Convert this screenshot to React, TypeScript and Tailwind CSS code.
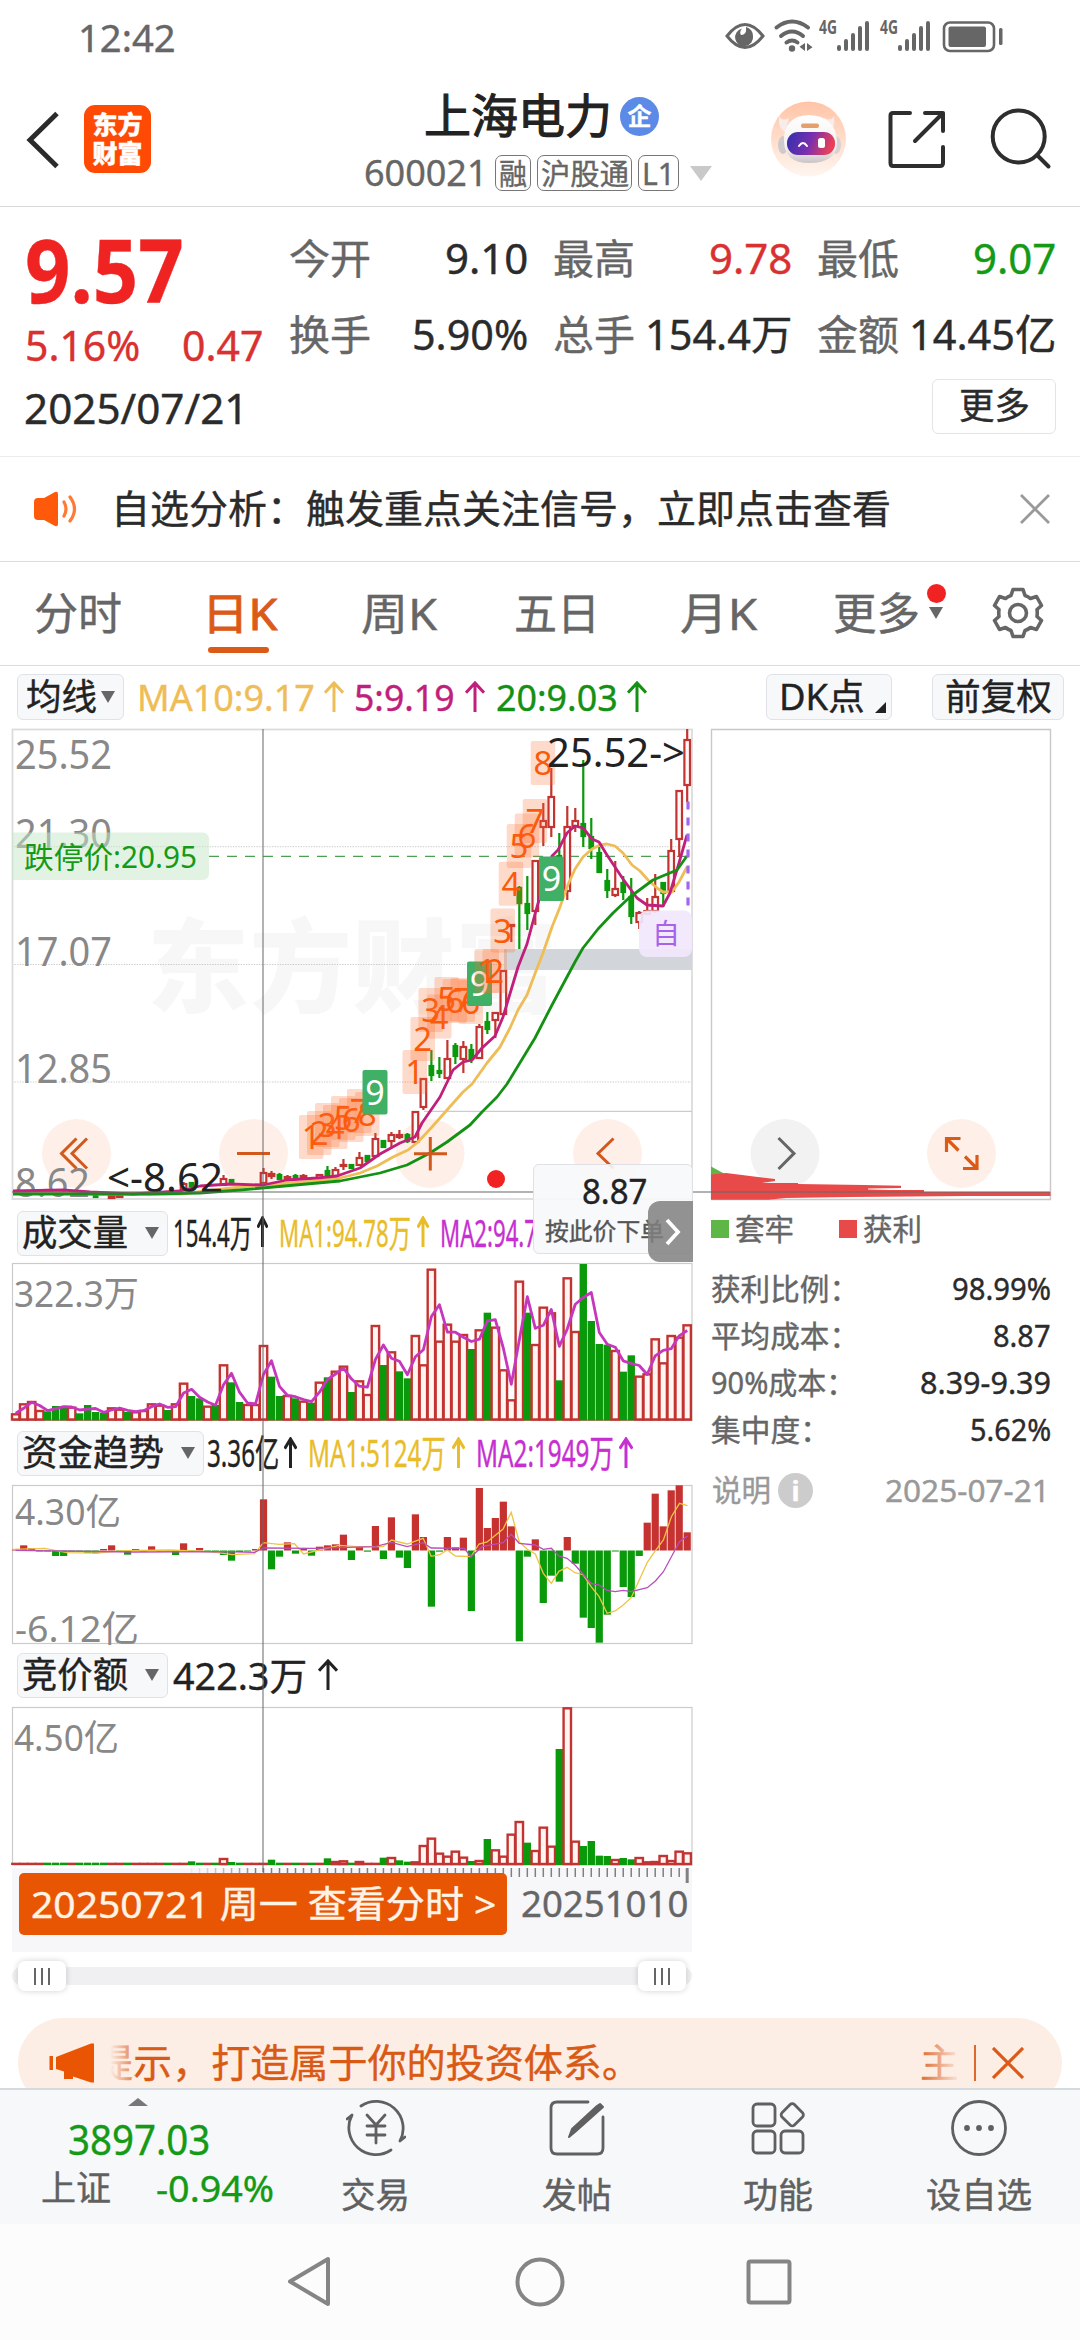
import React, { useLayoutEffect, useRef, useState } from "react";

const FONT = "font-['Noto_Sans','Noto_Sans_CJK_SC',sans-serif]";

/* Single-line text whose glyphs are condensed or widened to a given width. */
function Fit({ w, className = "", children }: { w: number; className?: string; children: React.ReactNode }) {
  const ref = useRef<HTMLSpanElement>(null);
  const [k, setK] = useState(1);
  useLayoutEffect(() => {
    if (ref.current && ref.current.offsetWidth > 0) setK(w / ref.current.offsetWidth);
  }, [w]);
  return (
    <span className={`block shrink-0 whitespace-nowrap leading-none ${className}`} style={{ width: w }}>
      <span ref={ref} className="inline-block origin-left" style={{ transform: `scaleX(${k})` }}>
        {children}
      </span>
    </span>
  );
}

function Up({ className = "" }: { className?: string }) {
  return (
    <svg viewBox="0 0 20 32" preserveAspectRatio="none" className={`h-[31px] shrink-0 ${className}`} fill="none" stroke="currentColor" strokeWidth="3">
      <path d="M10 32V2M1 12L10 2L19 12" vectorEffect="non-scaling-stroke" />
    </svg>
  );
}

function Down({ className = "" }: { className?: string }) {
  return (
    <svg viewBox="0 0 14 12" className={`h-3 w-3.5 shrink-0 ${className}`}>
      <path d="M0 0H14L7 12Z" fill="currentColor" />
    </svg>
  );
}

/* Text inside a chart, stretched to its width. */
function L({ x, y, w, s, fill = "#888", children }: { x: number; y: number; w: number; s: number; fill?: string; children: string }) {
  return (
    <text x={x} y={y} fontSize={s} fill={fill} textLength={w} lengthAdjust="spacingAndGlyphs">
      {children}
    </text>
  );
}

const RED = "#c23431";
const GREEN = "#0a990a";
const cx = (i: number) => 15.7 + 7.994 * i;

const VOL: [string, number][] = [
  ["r", 640], ["r", 610], ["r", 603], ["r", 630], ["g", 634], ["g", 618], ["g", 622], ["r", 620], ["g", 640], ["g", 615],
  ["g", 636], ["g", 638], ["r", 622], ["r", 626], ["g", 636], ["r", 634], ["r", 630], ["r", 610], ["r", 614], ["g", 630],
  ["r", 610], ["r", 548], ["g", 588], ["g", 595], ["r", 617], ["g", 615], ["r", 493], ["g", 547], ["g", 606], ["r", 612],
  ["r", 612], ["r", 435], ["g", 530], ["g", 588], ["r", 585], ["g", 595], ["r", 602], ["g", 608], ["r", 545], ["g", 532],
  ["r", 512], ["r", 497], ["g", 576], ["r", 541], ["r", 582], ["r", 375], ["g", 495], ["r", 454], ["g", 514], ["g", 535],
  ["r", 405], ["r", 493], ["r", 206], ["r", 422], ["r", 371], ["r", 422], ["r", 402], ["g", 447], ["r", 388], ["g", 338],
  ["r", 380], ["r", 508], ["r", 598], ["r", 242], ["g", 338], ["r", 432], ["r", 320], ["r", 337], ["g", 541], ["r", 232],
  ["r", 393], ["g", 192], ["g", 363], ["g", 432], ["g", 434], ["r", 450], ["g", 515], ["g", 466], ["r", 527], ["r", 520],
  ["r", 415], ["r", 487], ["r", 405], ["r", 410], ["r", 373],
];

const FUND = [
  358, 346, 354, 362, 362, 378, 378, 365, 364, 369, 370, 357, 346, 362, 374, 357, 362, 349, 362, 363, 375, 340, 366, 354, 362, 367, 375, 392, 366,
  362, 357, 208, 418, 380, 337, 371, 357, 377, 350, 346, 343, 314, 390, 349, 365, 288, 387, 262, 383, 414, 253, 321, 530, 365, 321, 352, 323, 543,
  174, 294, 264, 215, 289, 634, 380, 328, 519, 437, 455, 321, 401, 563, 594, 638, 554, 362, 471, 501, 378, 278, 191, 289, 181, 166, 307,
];

const AUCTION: Record<number, number> = {
  22: 634, 26: 624, 27: 636, 32: 629, 39: 625, 40: 633, 41: 631, 43: 633, 46: 623, 47: 621, 48: 631, 49: 635, 50: 634, 51: 585, 52: 563,
  53: 608, 54: 617, 55: 602, 56: 620, 57: 633, 58: 630, 59: 567, 60: 598, 61: 617, 62: 551, 63: 513, 64: 578, 65: 600, 66: 530, 67: 587,
  68: 297, 69: 172, 70: 572, 71: 588, 72: 573, 73: 617, 74: 618, 75: 627, 76: 624, 77: 628, 78: 621, 79: 634, 80: 633, 81: 615, 82: 630,
  83: 602, 84: 607,
};

/* index, colour, body top, body bottom, high, low */
const CANDLES: [number, string, number, number, number, number][] = [
  [1, "r", 1192, 1194, 1191, 1195], [4, "r", 1190, 1192, 1189, 1193], [10, "g", 1195, 1197, 1193, 1197], [12, "r", 1196, 1198, 1195, 1199],
  [13, "r", 1195, 1197, 1195, 1198], [21, "r", 1184, 1190, 1182, 1190], [22, "g", 1183, 1186, 1182, 1187], [26, "r", 1179, 1185, 1175, 1186],
  [27, "g", 1180, 1184, 1179, 1184], [31, "r", 1173, 1183, 1168, 1183], [32, "r", 1174, 1176, 1171, 1179], [33, "g", 1175, 1179, 1173, 1180],
  [34, "r", 1177, 1179, 1175, 1180], [35, "g", 1176, 1178, 1174, 1179], [36, "r", 1176, 1178, 1174, 1180], [38, "r", 1175, 1178, 1174, 1178],
  [39, "g", 1171, 1176, 1166, 1177], [40, "r", 1170, 1176, 1167, 1177], [41, "r", 1165, 1166, 1159, 1170], [42, "g", 1165, 1168, 1164, 1169],
  [43, "r", 1158, 1165, 1152, 1166], [44, "g", 1156, 1161, 1156, 1162], [45, "r", 1139, 1156, 1133, 1156], [46, "g", 1141, 1147, 1140, 1148],
  [47, "r", 1135, 1141, 1132, 1147], [48, "r", 1135, 1137, 1130, 1139], [49, "g", 1135, 1141, 1133, 1143], [50, "r", 1112, 1142, 1112, 1142],
  [51, "r", 1079, 1107, 1079, 1110], [52, "g", 1066, 1075, 1050, 1081], [53, "g", 1071, 1073, 1057, 1078], [54, "r", 1059, 1078, 1040, 1078],
  [55, "g", 1046, 1056, 1043, 1064], [56, "r", 1047, 1059, 1041, 1073], [57, "g", 1050, 1059, 1044, 1063], [58, "r", 1027, 1058, 1024, 1058],
  [59, "g", 1022, 1029, 1012, 1034], [60, "r", 1013, 1020, 1012, 1038], [61, "r", 971, 1014, 971, 1014], [62, "r", 925, 926, 924, 942],
  [63, "g", 888, 903, 886, 949], [64, "g", 904, 913, 876, 930], [65, "r", 861, 911, 861, 925], [66, "r", 821, 827, 803, 846],
  [67, "r", 797, 827, 768, 837], [68, "g", 856, 864, 833, 870], [69, "r", 827, 891, 806, 900], [70, "r", 821, 826, 808, 832],
  [71, "g", 824, 836, 760, 847], [72, "g", 837, 848, 818, 859], [73, "g", 853, 872, 847, 873], [74, "g", 881, 890, 869, 898],
  [75, "r", 889, 895, 861, 897], [76, "g", 883, 892, 876, 900], [77, "g", 897, 916, 878, 924], [78, "r", 913, 922, 911, 929],
  [79, "r", 911, 914, 898, 915], [80, "r", 897, 911, 874, 913], [81, "g", 883, 893, 883, 907], [82, "r", 851, 891, 839, 892],
  [83, "r", 791, 839, 791, 857], [84, "r", 740, 785, 729, 802],
];

const MARKS: [string, number, number][] = [
  ["1", 299, 1115], ["2", 307, 1111], ["3", 315, 1103], ["4", 323, 1105], ["5", 331, 1096], ["6", 339, 1098], ["7", 347, 1089], ["8", 355, 1092],
  ["1", 402.5, 1050], ["2", 410.5, 1017], ["3", 418.5, 988], ["4", 427, 994.5], ["5", 434.5, 977], ["6", 442.5, 979], ["7", 450.5, 978], ["6", 458.5, 980],
  ["3", 490.5, 908.5], ["4", 498.7, 861.7], ["5", 506.7, 824], ["6", 514.7, 813.5], ["7", 522.7, 799], ["8", 530.7, 741],
];
const MARKS_TOP: [string, number, number][] = [["1", 474.5, 949], ["2", 482.5, 949]];
const NINES: [number, number][] = [[362.5, 1070], [467, 961.5], [539, 856.5]];

const MA5 = "13,1191 63,1190 90,1192 133,1194 180,1191 200,1186 230,1184 263,1185 287,1180 317,1178 337,1176 360,1168 380,1154 400,1143 415,1137 422,1123 440,1097 453,1070 463,1062 472,1060 482,1048 495,1036 503,1017 512,987 518,967 527,944 535,914 539,900 546,875 552,856 558,850 567,833 575,826 583,828 592,839 599,842 607,855 623,879 637,898 647,905 663,906 670,893 679,863 687,835";
const MA10 = "13,1192 100,1194 180,1194 240,1187 290,1183 317,1181 340,1178 360,1173 377,1166 393,1157 408,1150 418,1142 432,1127 447,1110 463,1092 472,1084 487,1063 500,1047 510,1028 518,1010 527,995 536,971 543,953 552,927 560,907 567,887 575,869 583,857 592,849 600,845 607,844 615,846 623,853 632,865 640,871 648,880 657,888 663,892 672,892 679,882 687,867";
const MA20 = "13,1194 150,1194 200,1193 240,1190 290,1185.5 340,1181 360,1177 380,1173 407,1165 430,1153 447,1142 470,1125 482,1112 497,1097 507,1084 518,1066 535,1038 552,1005 560,990 575,962 583,948 598,929 613,913 630,897 653,880 677,870 687,856";

const scale = (pts: [number, number][], base: number) => pts.map(([x, y]) => `${(x / 2.24).toFixed(1)},${(base + y / 3).toFixed(1)}`).join(" ");
const FUND_MA1 = scale([[28, 358], [100, 355], [150, 368], [215, 369], [280, 362], [380, 360], [480, 366], [520, 374], [570, 371], [590, 338], [625, 343], [660, 341], [680, 372], [715, 360], [760, 346], [800, 350], [858, 350], [877, 330], [912, 342], [948, 325], [966, 379], [985, 374], [1002, 360], [1020, 378], [1055, 380], [1073, 342], [1091, 336], [1127, 297], [1145, 247], [1163, 335], [1181, 358], [1199, 372], [1217, 430], [1235, 460], [1252, 424], [1270, 412], [1288, 428], [1306, 434], [1324, 470], [1342, 500], [1360, 550], [1378, 543], [1396, 525], [1414, 503], [1432, 450], [1450, 397], [1468, 362], [1486, 330], [1504, 260], [1522, 220], [1540, 227]], 1430);
const FUND_MA2 = scale([[35, 361], [300, 366], [500, 365], [570, 367], [590, 354], [700, 355], [840, 350], [877, 337], [912, 350], [948, 338], [966, 354], [1040, 355], [1055, 380], [1080, 350], [1127, 338], [1145, 313], [1163, 340], [1199, 345], [1217, 358], [1235, 355], [1252, 378], [1270, 385], [1288, 405], [1306, 432], [1324, 460], [1342, 465], [1360, 481], [1378, 485], [1396, 481], [1414, 485], [1450, 473], [1468, 453], [1486, 425], [1504, 380], [1522, 335], [1540, 318]], 1430);

function Bars({ tops, base, bottom }: { tops: [string, number][]; base: number; bottom: number }) {
  return (
    <g>
      {tops.map(([c, t], i) => {
        const y = base + t / 3;
        const x = cx(i);
        if (c === "g") return <rect key={i} x={x - 3.7} y={y} width="7.4" height={bottom - y} fill={GREEN} />;
        if (bottom - y < 3.5) return <rect key={i} x={x - 4.6} y={Math.min(y, bottom - 2)} width="9.2" height={Math.max(bottom - y, 2)} fill={RED} />;
        return <rect key={i} x={x - 3.7} y={y + 1} width="7.4" height={bottom - y - 2} fill="#fff6f4" stroke={RED} strokeWidth="2.4" />;
      })}
    </g>
  );
}

function PriceChart() {
  return (
    <svg viewBox="0 721 700 484" className="block h-[484px] w-[700px]">
      <text x="147" y="1005" fontSize="102" fontWeight="900" fill="#f7f7f7" textLength="410">东方财富</text>
      <path d="M12 846.7H692M12 964.5H692M12 1082H692" stroke="#c9c9c9" strokeWidth="1" strokeDasharray="1.3 1.3" fill="none" />
      <rect x="12.5" y="729.5" width="679.5" height="469.5" fill="none" stroke="#dcdcde" strokeWidth="1.8" />
      <path d="M424 1111.3H692" stroke="#ccc" strokeWidth="1.2" />
      <path d="M209 856.4H687" stroke="#4c9f55" strokeWidth="1.4" strokeDasharray="10 8" />
      <rect x="504" y="949" width="188" height="21" fill="#d2d6db" />
      {[76.5, 253.5, 430, 607.5].map((x) => (
        <circle key={x} cx={x} cy="1153.5" r="34.5" fill="#fef0e9" />
      ))}
      <L x={15} y={768.5} w={97} s={40}>25.52</L>
      <L x={15} y={848} w={97} s={40}>21.30</L>
      <L x={15} y={966} w={97} s={40}>17.07</L>
      <L x={15} y={1083} w={97} s={40}>12.85</L>
      <L x={15} y={1197} w={75} s={40}>8.62</L>
      <path d="M12 832.5H203a6 6 0 0 1 6 6V874a6 6 0 0 1-6 6H12Z" fill="#c5e8c9" fillOpacity=".5" />
      <L x={24} y={868} w={173} s={30} fill="#159a15">跌停价:20.95</L>
      {CANDLES.map(([i, c, t, b, h, l]) => {
        const x = cx(i);
        const col = c === "g" ? GREEN : RED;
        return (
          <g key={i} stroke={col} strokeWidth="2.2" fill={c === "g" ? GREEN : "#fff8f7"}>
            <path d={`M${x} ${h}V${t}M${x} ${b}V${l}`} />
            <rect x={x - (c === "g" ? 1.8 : 2.8)} y={t} width={c === "g" ? 3.6 : 5.6} height={b - t} />
          </g>
        );
      })}
      <g fill="none" strokeWidth="2.8" strokeLinejoin="round">
        <polyline points={MA10} stroke="#efbd57" />
        <polyline points={MA5} stroke="#c01f7c" />
        <polyline points={MA20} stroke="#149114" />
      </g>
      {MARKS.map(([t, x, y], i) => (
        <g key={i}>
          <rect x={x} y={y} width="24.5" height="44" rx="2" fill="#fd6a2a" fillOpacity=".25" />
          <text x={x + 12.3} y={y + 34} fontSize="33" fill="#fb5a0a" textAnchor="middle">{t}</text>
        </g>
      ))}
      {NINES.map(([x, y]) => (
        <g key={x}>
          <rect x={x} y={y} width="25" height="44.5" rx="2" fill="#3fb065" />
          <text x={x + 12.5} y={y + 34.5} fontSize="34" fill="#fff" textAnchor="middle">9</text>
        </g>
      ))}
      {MARKS_TOP.map(([t, x, y]) => (
        <g key={x}>
          <rect x={x} y={y} width="24.5" height="44" rx="2" fill="#fd6a2a" fillOpacity=".25" />
          <text x={x + 12.3} y={y + 34} fontSize="33" fill="#fb5a0a" textAnchor="middle">{t}</text>
        </g>
      ))}
      <path d="M688 801.5V906" stroke="#a566ec" strokeWidth="3.2" strokeDasharray="8 8" />
      <rect x="639" y="910.5" width="53" height="46.5" rx="8" fill="#f1e7fd" fillOpacity=".92" />
      <L x={652} y={944} w={28} s={28} fill="#a763ea">自</L>
      <L x={547} y={766.5} w={138} s={40} fill="#222">{"25.52->"}</L>
      <L x={107} y={1191.5} w={116} s={40} fill="#222">{"<-8.62"}</L>
      <g fill="none" stroke="#d2581c" strokeWidth="3">
        <path d="M76.5 1138.5L61.5 1153.5L76.5 1168.5M87 1138.5L72 1153.5L87 1168.5" />
        <path d="M237 1153.5H270M414 1153.7H447M430.3 1137V1170.5" />
        <path d="M613.5 1138.5L598 1153.5L613.5 1168.5" />
      </g>
      <circle cx="496" cy="1179" r="9" fill="#f02222" />
    </svg>
  );
}

function ChipChart() {
  return (
    <svg viewBox="700 721 380 484" className="block h-[484px] w-[380px]">
      <path d="M711.5 1199V729.5H1050.5V1199.5H711" fill="none" stroke="#c8c8c8" strokeWidth="1.4" />
      <circle cx="785" cy="1153.5" r="34.5" fill="#f2f2f2" />
      <circle cx="961.5" cy="1153.5" r="34.5" fill="#fef0e9" />
      <path d="M778.5 1138L794 1153.4L778.5 1169" fill="none" stroke="#666" strokeWidth="3" />
      <g fill="none" stroke="#dc5a18" strokeWidth="3.2">
        <path d="M946.5 1152V1138.5H960.5M946.5 1138.5L958.5 1150.5M977 1155V1168.5H963M977 1168.5L965 1156.5" />
      </g>
      <path d="M711 1166.5L724 1173.5V1176H711Z" fill="#5db645" />
      <path d="M711 1174.5L726 1173L775 1179V1181L762 1183H798V1184L864 1185L901 1185.7V1188L868 1188.5V1189.5L890 1190H924V1192H1050.5V1196H967L851 1197L786 1198L768 1199.8H711Z" fill="#e84a4a" />
    </svg>
  );
}

function Head({ label, w, children }: { label: string; w: number; children: React.ReactNode }) {
  return (
    <div className="flex h-[57px] items-center pl-[17px]">
      <div className="flex h-[45px] shrink-0 items-center justify-between rounded-md border border-[#dfe2e7] bg-[#f7f8fa] pr-2 pl-[4px]" style={{ width: w + 45 }}>
        <Fit w={w} className="-mt-[2px] text-[36px] text-[#222]">{label}</Fit>
        <Down className="-mt-[2px] text-[#666]" />
      </div>
      {children}
    </div>
  );
}

function Stat({ label, value, w, color = "text-[#2b2b2b]" }: { label: string; value: string; w: number; color?: string }) {
  return (
    <div className="flex h-[76px] items-center justify-between text-[42px]">
      <Fit w={82} className="text-[41px] text-[#666]">{label}</Fit>
      <Fit w={w} className={color}>{value}</Fit>
    </div>
  );
}

function Tab({ children, w, active }: { children: string; w: number; active?: boolean }) {
  return <Fit w={w} className={active ? "text-[44px] text-[#dc5a18] [-webkit-text-stroke:1px]" : "text-[44px] text-[#666]"}>{children}</Fit>;
}

function StatusBar() {
  return (
    <div className="flex h-[76px] items-center pl-[78px] text-[#666]">
      <Fit w={98} className="-mt-[3px] text-[39px]">12:42</Fit>
      <svg viewBox="720 10 290 56" className="mt-0 ml-[545px] h-14 w-[290px]" fill="none" stroke="#666" strokeWidth="3">
        <path d="M726 36Q744 13 762 36Q744 59 726 36Z" />
        <path d="M741 28.5a9 9 0 1 0 11 7.5a9 9 0 0 0-7-9q1 8-5 8q-2-3 1-6.5Z" fill="#666" stroke="none" />
        <g strokeWidth="4" strokeLinecap="round">
          <path d="M775.5 27.5Q791 15.5 807 27.5M780 36Q791 27 802 36M785.5 42.5Q791 38.5 796.5 42.5" />
        </g>
        <circle cx="791" cy="48.5" r="3.2" fill="#666" stroke="none" />
        <path d="M804 43V51L798.5 46.8ZM806 43V51L811.5 47.2Z" fill="#666" stroke="none" />
        <g strokeWidth="4" strokeLinecap="round">
          <path d="M838 47V49M845 41V49M852 35V49M859 28V49M866 23V49M899 47V49M906 41V49M913 35V49M920 28V49M927 23V49" />
        </g>
        <g fill="#666" stroke="none" fontSize="19" fontWeight="700">
          <text x="818" y="34" textLength="18" lengthAdjust="spacingAndGlyphs">4G</text>
          <text x="879" y="34" textLength="18" lengthAdjust="spacingAndGlyphs">4G</text>
        </g>
        <rect x="943" y="22.5" width="50" height="28.5" rx="6" strokeWidth="2.6" />
        <rect x="947.5" y="26.5" width="37.5" height="20.5" rx="2" fill="#666" stroke="none" />
        <rect x="998" y="28" width="3.5" height="17" rx="1.5" fill="#666" stroke="none" />
      </svg>
    </div>
  );
}

function Header() {
  return (
    <div className="flex h-[131px] border-b border-[#d9d9d9]">
      <div className="flex w-[364px]">
        <svg viewBox="24 108 38 64" className="mt-8 ml-6 h-16 w-[38px]" fill="none" stroke="#2b2b2b" strokeWidth="5">
          <path d="M57 113.5L30 140L57 166.5" />
        </svg>
        <div className="mt-[29px] ml-[22px] flex h-[68px] w-[67px] flex-col items-center justify-center rounded-[11px] bg-[#ff4a05] text-[25px] leading-[29px] font-black text-white">
          <span>东方</span>
          <span>财富</span>
        </div>
      </div>
      <div className="w-[406px] pt-[14px]">
        <div className="flex h-[52px] items-center pl-[60px]">
          <Fit w={188} className="-mt-[2px] text-[47px] text-[#222] [-webkit-text-stroke:1.1px]">上海电力</Fit>
          <div className="ml-[8px] flex size-[39px] items-center justify-center rounded-full bg-[#5b8be6] text-[24px] leading-none font-bold text-white">企</div>
        </div>
        <div className="mt-[13px] flex h-9 items-center text-[#666]">
          <Fit w={124} className="text-[36px]">600021</Fit>
          <div className="ml-[7px] flex h-9 w-9 items-center justify-center rounded-[7px] border border-[#777]"><Fit w={28} className="text-[29px]">融</Fit></div>
          <div className="ml-[6px] flex h-9 w-[95px] items-center justify-center rounded-[7px] border border-[#777]"><Fit w={88} className="text-[29px]">沪股通</Fit></div>
          <div className="ml-[6px] flex h-9 w-[41px] items-center justify-center rounded-[7px] border border-[#777]"><Fit w={33} className="text-[31px]">L1</Fit></div>
          <svg viewBox="0 0 22 15" className="ml-[11px] h-[15px] w-[22px]"><path d="M0 0H22L11 15Z" fill="#c9c9c9" /></svg>
        </div>
      </div>
      <svg viewBox="770 101 76 76" className="mt-[25px] size-[76px]">
        <defs>
          <linearGradient id="peach" x1="0" y1="0" x2="0" y2="1"><stop offset="0" stopColor="#ffc4a6" /><stop offset="1" stopColor="#fff6f0" /></linearGradient>
          <linearGradient id="visor" x1="0" y1="0" x2="1" y2=".2"><stop offset="0" stopColor="#2f2fae" /><stop offset=".55" stopColor="#7a2fae" /><stop offset="1" stopColor="#e8405a" /></linearGradient>
          <linearGradient id="shell" x1="0" y1="0" x2="0" y2="1"><stop offset="0" stopColor="#fff" /><stop offset=".7" stopColor="#f4eeee" /><stop offset="1" stopColor="#c9c4c6" /></linearGradient>
        </defs>
        <circle cx="808.5" cy="139" r="37.5" fill="url(#peach)" />
        <ellipse cx="783" cy="145" rx="5" ry="9" fill="#cfc9cb" />
        <ellipse cx="836" cy="145" rx="5" ry="9" fill="#d8d2d4" />
        <path d="M779 116q3 6 10 2l-4 14q-7-3-6-16ZM834 116q-3 6-10 2l4 14q8-3 6-16Z" fill="#f6ecea" />
        <path d="M784 142Q783 116 809 115Q836 116 837 142Q837 163 809 163Q785 163 784 142Z" fill="url(#shell)" />
        <rect x="801" y="123.5" width="18" height="4.5" rx="2" fill="#e3a06c" />
        <rect x="787" y="132" width="48" height="23" rx="11" fill="url(#visor)" />
        <path d="M799 146q4-6 8 0" fill="none" stroke="#fff" strokeWidth="2" strokeLinecap="round" />
        <rect x="818" y="138" width="7" height="10" rx="2.5" fill="#fff" />
      </svg>
      <svg viewBox="884 107 66 66" className="mt-[31px] ml-[38px] size-[66px]" fill="none" stroke="#2e2e2e" strokeWidth="4" strokeLinecap="round" strokeLinejoin="round">
        <path d="M910 113H893Q890.5 113 890.5 115.5V163Q890.5 166 893 166H940Q943 166 943 163V147M925 113H943V131M943 113L915 141" />
      </svg>
      <svg viewBox="988 105 66 66" className="mt-[29px] ml-[38px] size-[66px]" fill="none" stroke="#2e2e2e" strokeWidth="4" strokeLinecap="round">
        <circle cx="1018.7" cy="136.5" r="26" />
        <path d="M1037 155L1048.5 166.5" />
      </svg>
    </div>
  );
}

function Quote() {
  return (
    <div className="h-[250px] border-b border-[#ececec]">
      <div className="flex h-[171px]">
        <div className="w-[289px] pt-[21px] pl-[25px]">
          <div className="flex h-[84px] items-center"><Fit w={159} className="-mt-[2px] text-[87px] font-bold text-[#f02323]">9.57</Fit></div>
          <div className="mt-[11px] flex h-11 items-center text-[42px] text-[#d93030]">
            <Fit w={115}>5.16%</Fit>
            <Fit w={81} className="ml-[42px]">0.47</Fit>
          </div>
        </div>
        <div className="grid w-[767px] grid-cols-3 content-start gap-x-[25px] pt-[13px]">
          <Stat label="今开" value="9.10" w={83} />
          <Stat label="最高" value="9.78" w={83} color="text-[#d93030]" />
          <Stat label="最低" value="9.07" w={83} color="text-[#159a15]" />
          <Stat label="换手" value="5.90%" w={116} />
          <Stat label="总手" value="154.4万" w={147} />
          <Stat label="金额" value="14.45亿" w={147} />
        </div>
      </div>
      <div className="flex h-[56px] items-center justify-between pr-6 pl-[24px]">
        <Fit w={224} className="mt-1 text-[42px] text-[#2b2b2b]">2025/07/21</Fit>
        <div className="flex h-[55px] w-[124px] items-center justify-center rounded-md border-[1.5px] border-[#e4e4e4]">
          <Fit w={71} className="text-[36px] text-[#2b2b2b]">更多</Fit>
        </div>
      </div>
    </div>
  );
}

function Notice() {
  return (
    <div className="flex h-[105px] items-center border-b border-[#dcdcdc]">
      <svg viewBox="32 487 48 42" className="ml-8 h-[42px] w-12">
        <path d="M34 501q0-4 4-4h6l11-6q3-1 3 2V523q0 3-3 2L44 519h-6q-4 0-4-4Z" fill="#ff5a0c" />
        <path d="M64 501q4 7 0 14M70 496q9 12 0 24" fill="none" stroke="#ff7a35" strokeWidth="3.2" strokeLinecap="round" />
      </svg>
      <Fit w={780} className="-mt-[3px] ml-[31px] text-[39px] text-[#2b2b2b]">自选分析：触发重点关注信号，立即点击查看</Fit>
      <svg viewBox="0 0 30 30" className="ml-[129px] size-[30px]"><path d="M1 1L29 29M29 1L1 29" stroke="#999" strokeWidth="2.8" /></svg>
    </div>
  );
}

function Tabs() {
  return (
    <div className="relative flex h-[104px] items-center border-b border-[#dcdcdc] pb-[2px] pl-[34px]">
      <Tab w={88}>分时</Tab>
      <div className="relative ml-[80px]">
        <Tab w={75} active>日K</Tab>
        <span className="absolute top-[56px] left-[6px] h-[6px] w-[61px] rounded-full bg-[#dc5a18]" />
      </div>
      <div className="ml-[84px]"><Tab w={76}>周K</Tab></div>
      <div className="ml-[77px]"><Tab w={86}>五日</Tab></div>
      <div className="ml-[80px]"><Tab w={77}>月K</Tab></div>
      <div className="relative ml-[76px]">
        <Tab w={87}>更多</Tab>
        <span className="absolute -top-[7px] left-[94px] size-[19px] rounded-full bg-[#f02222]" />
      </div>
      <Down className="mt-[1px] ml-[9px] text-[#666]" />
      <svg viewBox="-27 -27 54 54" className="ml-[48px] size-[54px]" fill="none" stroke="#666" strokeWidth="3.6" strokeLinejoin="round">
        <path d="M-5-23.5H5L7-17.5Q10-16.5 12.5-14.5L18.5-16.5L23.5-7.5L19-3.5Q19.5 0 19 3.5L23.5 7.5L18.5 16.5L12.5 14.5Q10 16.5 7 17.5L5 23.5H-5L-7 17.5Q-10 16.5-12.5 14.5L-18.5 16.5L-23.5 7.5L-19 3.5Q-19.5 0-19-3.5L-23.5-7.5L-18.5-16.5L-12.5-14.5Q-10-16.5-7-17.5Z" />
        <circle r="8.5" />
      </svg>
    </div>
  );
}

function MaRow() {
  return (
    <div className="flex h-[55px] items-center pt-[6px] pl-[17px] text-[37px]">
      <div className="flex h-[46px] w-[107px] items-center rounded-md border border-[#dfe2e7] bg-[#f7f8fa] pl-2">
        <Fit w={71} className="text-[36px] text-[#222]">均线</Fit>
        <Down className="ml-[4px] text-[#666]" />
      </div>
      <div className="ml-[13px] flex items-center text-[#efbd57]"><Fit w={178}>MA10:9.17</Fit><Up className="ml-[9px] w-[20px]" /></div>
      <div className="ml-[10px] flex items-center text-[#c01f7c]"><Fit w={101}>5:9.19</Fit><Up className="ml-[10px] w-[20px]" /></div>
      <div className="ml-[11px] flex items-center text-[#149114]"><Fit w={122}>20:9.03</Fit><Up className="ml-[9px] w-[20px]" /></div>
      <div className="ml-[119px] flex h-[46px] w-[126px] items-center rounded-md border border-[#dfe2e7] bg-[#f7f8fa] pl-3">
        <Fit w={86} className="text-[36px] text-[#222]">DK点</Fit>
        <svg viewBox="0 0 11 11" className="mt-[22px] ml-[10px] size-[11px]"><path d="M11 0V11H0Z" fill="#222" /></svg>
      </div>
      <div className="ml-[40px] flex h-[46px] w-[132px] items-center justify-center rounded-md border border-[#dfe2e7] bg-[#f7f8fa]">
        <Fit w={107} className="text-[36px] text-[#222]">前复权</Fit>
      </div>
    </div>
  );
}

function VolumeChart() {
  const ma = VOL.map(([, t], i) => `${cx(i).toFixed(1)},${(1200 + (i ? (t + VOL[i - 1][1]) / 2 : t) / 3).toFixed(1)}`).join(" ");
  return (
    <svg viewBox="0 1262 700 163" className="block h-[163px] w-[700px]">
      <rect x="12.5" y="1263.5" width="679.5" height="157" fill="none" stroke="#cbcbcb" strokeWidth="1.2" />
      <L x={14} y={1307} w={125} s={36}>322.3万</L>
      <Bars tops={VOL} base={1200} bottom={1420.5} />
      <path d="M12.5 1420H692" stroke={RED} strokeOpacity=".5" strokeWidth="1.5" />
      <polyline points={ma} fill="none" stroke="#c637bd" strokeWidth="2.8" strokeLinejoin="round" />
    </svg>
  );
}

function FundChart() {
  return (
    <svg viewBox="0 1482 700 165" className="block h-[165px] w-[700px]">
      <rect x="12.5" y="1485.5" width="679.5" height="158" fill="none" stroke="#cbcbcb" strokeWidth="1.2" />
      <L x={15} y={1525} w={106} s={36}>4.30亿</L>
      <L x={15} y={1642} w={124} s={36}>-6.12亿</L>
      {FUND.map((t, i) => {
        const y = 1430 + t / 3;
        const up = t < 360;
        return <rect key={i} x={cx(i) - 3.6} y={up ? y : 1550.5} width="7.2" height={Math.max(1, Math.abs(1550.5 - y))} fill={up ? "#c5322f" : GREEN} />;
      })}
      <polyline points={FUND_MA1} fill="none" stroke="#ecc545" strokeWidth="1.3" />
      <polyline points={FUND_MA2} fill="none" stroke="#b84dbd" strokeWidth="1.3" />
    </svg>
  );
}

function AuctionChart() {
  const tops = VOL.map(([c], i) => [c, AUCTION[i] ?? 638] as [string, number]);
  return (
    <svg viewBox="0 1704 700 164" className="block h-[164px] w-[700px]">
      <rect x="12.5" y="1707.5" width="679.5" height="157.5" fill="none" stroke="#cbcbcb" strokeWidth="1.2" />
      <L x={14} y={1751} w={105} s={36}>4.50亿</L>
      <Bars tops={tops} base={1650} bottom={1865} />
    </svg>
  );
}

function Ruler() {
  return (
    <div className="relative ml-3 h-[84px] w-[680px] bg-[#f7f7fa]">
      <svg viewBox="12 1868 680 16" className="block h-4 w-[680px]">
        {VOL.map((_, i) => (i < 22 ? null : <path key={i} d={`M${cx(i)} 1868V${i === 84 ? 1883 : 1877}`} stroke="#808080" strokeOpacity={i < 30 ? (i - 21) / 10 : 1} strokeWidth={i === 84 ? 3 : 1.5} />))}
      </svg>
      <div className="absolute top-[5px] left-[7px] flex h-[62px] w-[488px] items-center rounded-[5px] bg-[#e85503] pl-3">
        <Fit w={465} className="-mt-[2px] text-[37px] text-[#fff3e6]">{"20250721 周一 查看分时 >"}</Fit>
      </div>
      <Fit w={167} className="ml-[509px] text-[37px] text-[#666]">20251010</Fit>
    </div>
  );
}

function Handle() {
  return (
    <div className="flex h-[30px] w-12 items-center justify-center gap-[5px] rounded-[7px] bg-white shadow-[0_0_6px_rgba(0,0,0,.18)]">
      <span className="h-[17px] w-[2px] bg-[#666]" />
      <span className="h-[17px] w-[2px] bg-[#666]" />
      <span className="h-[17px] w-[2px] bg-[#666]" />
    </div>
  );
}

function InfoRow({ k, kw, v, w }: { k: string; kw: number; v: string; w: number }) {
  return (
    <div className="flex h-[47px] items-center justify-between text-[31px]">
      <Fit w={kw} className="-mt-[2px] text-[30px] text-[#666]">{k}</Fit>
      <Fit w={w} className="-mt-[2px] text-[#2b2b2b]">{v}</Fit>
    </div>
  );
}

function Banner() {
  return (
    <div className="mt-[18px] h-[70px] overflow-hidden px-[18px]">
      <div className="flex h-[90px] items-center rounded-full bg-[#fdeee5] pl-[29px]">
        <svg viewBox="46 2040 50 46" className="h-[46px] w-[50px]">
          <path d="M48.5 2056V2070H52V2056ZM55 2057L90 2043.5H93V2082.5H90L72 2076.5V2079H63V2071.5L55 2069Z" fill="#ea5504" />
        </svg>
        <div className="relative ml-[13px] flex h-12 w-[531px] items-center justify-end overflow-hidden">
          <Fit w={547} className="-mt-[3px] text-[39px] text-[#d95a16]">提示，打造属于你的投资体系。</Fit>
          <span className="absolute inset-y-0 left-0 w-[26px] bg-linear-to-r from-[#fdeee5] to-[#fdeee5]/20" />
        </div>
        <div className="relative ml-[279px] flex h-12 w-[37px] items-center overflow-hidden">
          <Fit w={39} className="-mt-[3px] text-[39px] text-[#d95a16]">主</Fit>
          <span className="absolute inset-0 bg-linear-to-r from-[#fdeee5]/10 to-[#fdeee5]/90" />
        </div>
        <span className="ml-[17px] h-9 w-[2px] bg-[#dd6a2c]" />
        <svg viewBox="0 0 32 32" className="ml-[16px] size-8"><path d="M1 1L31 31M31 1L1 31" stroke="#dc5a18" strokeWidth="3.2" /></svg>
      </div>
    </div>
  );
}

function Item({ label, w, children }: { label: string; w: number; children: React.ReactNode }) {
  return (
    <div className="flex w-[201.3px] flex-col items-center pt-[8px]">
      <svg viewBox="-30 -30 60 60" className="size-[60px]" fill="none" stroke="#606060" strokeWidth="2.8" strokeLinecap="round" strokeLinejoin="round">{children}</svg>
      <Fit w={w} className="mt-[19px] text-[35px] text-[#606060]">{label}</Fit>
    </div>
  );
}

function BottomBar() {
  return (
    <div className="flex h-[136px] border-t-2 border-[#d6dade] bg-[#f7f8fa]">
      <div className="w-[275px]">
        <svg viewBox="0 0 20 8" className="mt-2 ml-[128px] h-2 w-5"><path d="M0 8H20L10 0Z" fill="#777" /></svg>
        <Fit w={142} className="mt-[12px] ml-[68px] text-[42px] text-[#159a15]">3897.03</Fit>
        <div className="mt-[9px] flex items-center">
          <Fit w={70} className="ml-[41px] text-[35px] text-[#606060]">上证</Fit>
          <Fit w={118} className="ml-[45px] text-[37px] text-[#159a15]">-0.94%</Fit>
        </div>
      </div>
      <Item label="交易" w={69}>
        <path d="M-15-22A27 27 0 0 1 24 13L29 9M-31-12M15 22A27 27 0 0 1-24-13L-29-9" />
        <path d="M-9-13L0-3L9-13M0-3V15M-9-2H9M-9 7H9" />
      </Item>
      <Item label="发帖" w={70}>
        <path d="M11-26H-20Q-26-26-26-20V20Q-26 26-20 26H20Q26 26 26 20V-11" />
        <path d="M23-24L26-21L-2 4L-8 9L-5 1L20-22Z" fill="#606060" strokeWidth="2" />
      </Item>
      <Item label="功能" w={70}>
        <rect x="-25" y="-24" width="22" height="22" rx="4" />
        <rect x="-25" y="3" width="22" height="22" rx="4" />
        <rect x="3" y="3" width="22" height="22" rx="4" />
        <rect x="5.5" y="-22" width="17.5" height="17.5" rx="3" transform="rotate(45 14.2 -13.2)" />
      </Item>
      <Item label="设自选" w={106}>
        <circle r="26.5" />
        <g fill="#606060" stroke="none"><circle cx="-12" r="2.9" /><circle r="2.9" /><circle cx="12" r="2.9" /></g>
      </Item>
    </div>
  );
}

export default function App() {
  return (
    <div className={`flex h-[2340px] w-[1080px] flex-col overflow-hidden bg-white [-webkit-text-stroke:0.4px] ${FONT}`}>
      <StatusBar />
      <Header />
      <Quote />
      <Notice />
      <Tabs />
      <MaRow />
      <div className="relative flex h-[1279px]">
        <div className="w-[700px]">
          <PriceChart />
          <Head label="成交量" w={106}>
            <div className="-mt-[4px] flex w-[367px] shrink-0 items-center overflow-hidden pl-[5px] text-[38px]">
              <Fit w={79} className="text-[#222]">154.4万</Fit><Up className="ml-[5px] w-[11px] text-[#222]" />
              <Fit w={132} className="ml-[11px] text-[#e9bd2a]">MA1:94.78万</Fit><Up className="ml-[6px] w-[12px] text-[#e9bd2a]" />
              <Fit w={132} className="ml-[11px] text-[#c62fd0]">MA2:94.78万</Fit>
            </div>
          </Head>
          <VolumeChart />
          <Head label="资金趋势" w={142}>
            <div className="-mt-[3px] flex items-center pl-[3px] text-[38px]">
              <Fit w={72} className="text-[#222]">3.36亿</Fit><Up className="ml-[5px] w-[13px] text-[#222]" />
              <Fit w={138} className="ml-[11px] text-[#e9bd2a]">MA1:5124万</Fit><Up className="ml-[6px] w-[13px] text-[#e9bd2a]" />
              <Fit w={138} className="ml-[11px] text-[#c62fd0]">MA2:1949万</Fit><Up className="ml-[5px] w-[14px] text-[#c62fd0]" />
            </div>
          </Head>
          <FundChart />
          <Head label="竞价额" w={106}>
            <div className="-mt-[2px] flex items-center pl-[5px] text-[38px] text-[#222]">
              <Fit w={134}>422.3万</Fit><Up className="ml-[11px] w-[20px]" />
            </div>
          </Head>
          <AuctionChart />
          <Ruler />
          <div className="mt-[9px] ml-3 flex h-[30px] w-[680px] items-center">
            <div className="flex h-[18px] w-full items-center justify-between rounded-full bg-[#f0f0f2] px-[6px]">
              <Handle />
              <Handle />
            </div>
          </div>
        </div>
        <div className="w-[380px]">
          <ChipChart />
          <div className="flex h-[48px] items-center pl-[11px] text-[30px] text-[#666]">
            <span className="size-[18px] bg-[#5db645]" />
            <Fit w={59} className="ml-[6px]">套牢</Fit>
            <span className="ml-[45px] size-[18px] bg-[#e84a4a]" />
            <Fit w={59} className="ml-[6px]">获利</Fit>
          </div>
          <div className="mt-[13px] w-[351px] pl-[11px]">
            <InfoRow k="获利比例：" kw={148} v="98.99%" w={99} />
            <InfoRow k="平均成本：" kw={148} v="8.87" w={58} />
            <InfoRow k="90%成本：" kw={144} v="8.39-9.39" w={131} />
            <InfoRow k="集中度：" kw={119} v="5.62%" w={81} />
          </div>
          <div className="mt-[13px] flex h-[46px] w-[350px] items-center pl-[12px] text-[#999]">
            <Fit w={59} className="text-[30px]">说明</Fit>
            <span className="ml-[7px] flex size-[35px] items-center justify-center rounded-full bg-[#ccc] text-[27px] leading-none font-bold text-white">i</span>
            <Fit w={165} className="ml-auto text-[31px]">2025-07-21</Fit>
          </div>
        </div>
        <div className="absolute top-[443px] left-[533px] h-[90px] w-[160px] rounded-md border border-[#dfe1e6] bg-[#f7f8fa]/90">
          <Fit w={65} className="mt-[8px] ml-[48px] text-[35px] text-[#222]">8.87</Fit>
          <Fit w={119} className="mt-[11px] ml-[11px] text-[24px] text-[#555]">按此价下单</Fit>
        </div>
        <div className="absolute top-[480px] left-[648px] flex h-[61px] w-[45px] items-center justify-center rounded-l-[12px] bg-[#808080]/85">
          <svg viewBox="0 0 16 28" className="ml-1 h-7 w-4" fill="none" stroke="#fff" strokeWidth="3.8"><path d="M2 2L13 14L2 26" /></svg>
        </div>
        <span className="absolute top-[8px] left-[262px] h-[1143px] w-[2px] bg-[#666]/50" />
        <span className="absolute top-[470px] left-[12px] h-[2px] w-[521px] bg-[#666]/50" />
        <span className="absolute top-[470px] left-[693px] h-[2px] w-[357px] bg-[#666]/50" />
      </div>
      <Banner />
      <BottomBar />
      <div className="flex h-[116px] bg-[#fcfcfc]">
        <svg viewBox="284 2254 50 56" className="mt-[30px] ml-[284px] h-14 w-[50px]" fill="none" stroke="#858585" strokeWidth="4" strokeLinejoin="round"><path d="M328 2259V2304L290 2281.5Z" /></svg>
        <svg viewBox="510 2252 60 60" className="mt-[28px] ml-[176px] size-[60px]" fill="none" stroke="#858585" strokeWidth="4"><circle cx="540" cy="2282" r="22.5" /></svg>
        <svg viewBox="740 2252 60 60" className="mt-[28px] ml-[170px] size-[60px]" fill="none" stroke="#858585" strokeWidth="4"><rect x="748.5" y="2261.5" width="41" height="41" rx="2" /></svg>
      </div>
    </div>
  );
}
